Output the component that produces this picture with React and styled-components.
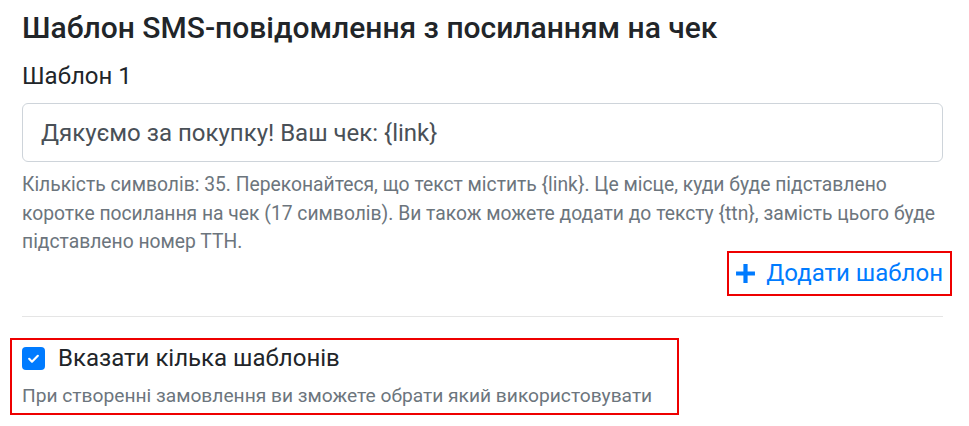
import React from 'react'
import styled, { createGlobalStyle } from 'styled-components'

const GlobalStyle = createGlobalStyle`
  * { margin: 0; padding: 0; box-sizing: border-box; }
  body {
    background: #fff;
    font-family: Roboto, "Liberation Sans", sans-serif;
    color: #212529;
  }
`

const Page = styled.div`
  width: 969px;
  height: 426px;
  padding: 10px 26px 0 22px;
`

const Title = styled.h2`
  font-size: 30px;
  font-weight: 500;
  line-height: 36px;
  color: #212529;
  margin-bottom: 16px;
`

const Label = styled.div`
  font-size: 24px;
  line-height: 28px;
  margin-bottom: 13px;
`

const Input = styled.div`
  height: 59px;
  border: 1px solid #ced4da;
  border-radius: 6px;
  display: flex;
  align-items: center;
  padding: 0 18px;
  font-size: 24px;
  color: #495057;
`

const Help = styled.p`
  margin-top: 9px;
  font-size: 19.3px;
  line-height: 28.5px;
  color: #6c757d;
`

const ButtonRow = styled.div`
  display: flex;
  justify-content: flex-end;
  margin-right: -9px;
  margin-top: -6px;
`

const Outline = styled.div`
  border: 2px solid #e00;
  padding: ${p => p.pad || '0'};
`

const AddButton = styled.button`
  border: none;
  background: none;
  display: flex;
  align-items: center;
  gap: 10px;
  color: #007bff;
  font-family: inherit;
  font-size: 24px;
  height: 41px;
  padding: 0 7px 0 6px;
`

const Divider = styled.hr`
  border: none;
  border-top: 1px solid #e5e5e5;
  margin: 20px 0 21px;
`

const CheckRow = styled.div`
  display: flex;
  align-items: center;
  gap: 13px;
  font-size: 24px;
  line-height: 28px;
  color: #212529;
`

const Box = styled.span`
  width: 23px;
  height: 23px;
  border-radius: 4px;
  background: #007bff;
  display: flex;
  align-items: center;
  justify-content: center;
`

const Sub = styled.div`
  margin-top: 13px;
  font-size: 19.2px;
  line-height: 22px;
  color: #6c757d;
`

export default function App() {
  return (
    <Page>
      <GlobalStyle />
      <Title>Шаблон SMS-повідомлення з посиланням на чек</Title>
      <Label>Шаблон 1</Label>
      <Input>Дякуємо за покупку! Ваш чек: {'{link}'}</Input>
      <Help>
        Кількість символів: 35. Переконайтеся, що текст містить {'{link}'}. Це місце, куди буде підставлено
        <br />
        коротке посилання на чек (17 символів). Ви також можете додати до тексту {'{ttn}'}, замість цього буде
        <br />
        підставлено номер ТТН.
      </Help>
      <ButtonRow>
        <Outline>
          <AddButton>
            <svg width="21" height="21" viewBox="0 0 20 20">
              <path d="M10 1v18M1 10h18" stroke="#007bff" strokeWidth="4" />
            </svg>
            Додати шаблон
          </AddButton>
        </Outline>
      </ButtonRow>
      <Divider />
      <div style={{ marginLeft: -12, width: 669 }}>
        <Outline pad="4.5px 10px 6px 10px">
          <CheckRow>
            <Box>
              <svg width="13" height="13" viewBox="0 0 12 12">
                <path d="M2 6.3l2.6 2.6L10 3.5" stroke="#fff" strokeWidth="2" fill="none" strokeLinecap="round" strokeLinejoin="round" />
              </svg>
            </Box>
            Вказати кілька шаблонів
          </CheckRow>
          <Sub>При створенні замовлення ви зможете обрати який використовувати</Sub>
        </Outline>
      </div>
    </Page>
  )
}
